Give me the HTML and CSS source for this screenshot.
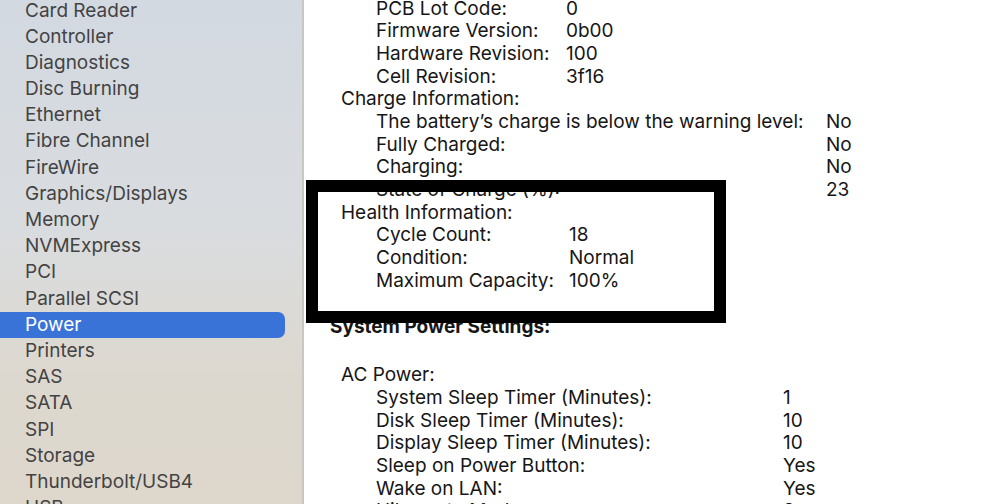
FILE: index.html
```html
<!DOCTYPE html>
<html lang="en">
<head>
  <meta charset="UTF-8">
  <title>System Information - Power</title>
  <link rel="stylesheet" href="styles.css">
</head>
<body>
  <div class="window">
    <!-- Sidebar list -->
    <ul class="sidebar">
      <li>Card Reader</li>
      <li>Controller</li>
      <li>Diagnostics</li>
      <li>Disc Burning</li>
      <li>Ethernet</li>
      <li>Fibre Channel</li>
      <li>FireWire</li>
      <li>Graphics/Displays</li>
      <li>Memory</li>
      <li>NVMExpress</li>
      <li>PCI</li>
      <li>Parallel SCSI</li>
      <li class="selected">Power</li>
      <li>Printers</li>
      <li>SAS</li>
      <li>SATA</li>
      <li>SPI</li>
      <li>Storage</li>
      <li>Thunderbolt/USB4</li>
      <li>USB</li>
    </ul>

    <!-- Detail pane -->
    <div class="detail">
      <div class="group sub pcb">
        <div class="row"><span class="label">PCB Lot Code:</span><span>0</span></div>
        <div class="row"><span class="label">Firmware Version:</span><span>0b00</span></div>
        <div class="row"><span class="label">Hardware Revision:</span><span>100</span></div>
        <div class="row"><span class="label">Cell Revision:</span><span>3f16</span></div>
      </div>

      <div class="heading">Charge Information:</div>
      <div class="group sub charge">
        <div class="row"><span class="label">The battery’s charge is below the warning level:</span><span>No</span></div>
        <div class="row"><span class="label">Fully Charged:</span><span>No</span></div>
        <div class="row"><span class="label">Charging:</span><span>No</span></div>
        <div class="row"><span class="label">State of Charge (%):</span><span>23</span></div>
      </div>

      <div class="heading">Health Information:</div>
      <div class="group sub health">
        <div class="row"><span class="label">Cycle Count:</span><span>18</span></div>
        <div class="row"><span class="label">Condition:</span><span>Normal</span></div>
        <div class="row"><span class="label">Maximum Capacity:</span><span>100%</span></div>
      </div>

      <div class="section-title">System Power Settings:</div>

      <div class="heading ac">AC Power:</div>
      <div class="group sub power">
        <div class="row"><span class="label">System Sleep Timer (Minutes):</span><span>1</span></div>
        <div class="row"><span class="label">Disk Sleep Timer (Minutes):</span><span>10</span></div>
        <div class="row"><span class="label">Display Sleep Timer (Minutes):</span><span>10</span></div>
        <div class="row"><span class="label">Sleep on Power Button:</span><span>Yes</span></div>
        <div class="row"><span class="label">Wake on LAN:</span><span>Yes</span></div>
        <div class="row"><span class="label">Hibernate Mode:</span><span>3</span></div>
      </div>

      <!-- annotation box drawn over the health section -->
      <div class="highlight"></div>
    </div>
  </div>
</body>
</html>
```

FILE: styles.css
```css
html, body {
  margin: 0;
  padding: 0;
  height: 100%;
  overflow: hidden;
}

body {
  font-family: Inter, "Liberation Sans", Arial, sans-serif;
  font-size: 19px;
  color: #161616;
  background: #ffffff;
}

.window {
  display: flex;
  height: 504px;
}

/* Sidebar */
.sidebar {
  list-style: none;
  margin: 0;
  padding: 0;
  width: 302px;
  flex-shrink: 0;
  border-right: 2px solid #c9c7c2;
  background: linear-gradient(180deg, #d3d9e1 0%, #d9dcdf 45%, #ddd8cf 75%, #ddd7cc 100%);
  overflow: hidden;
}

.sidebar li {
  height: 26.2px;
  line-height: 26.2px;
  padding-left: 25px;
  color: #434343;
  white-space: nowrap;
}

.sidebar li:first-child {
  margin-top: -2.5px;
}

.sidebar li.selected {
  margin-right: 17px;
  border-radius: 0 7px 7px 0;
  background: #3a73d8;
  color: #ffffff;
}

/* Detail pane */
.detail {
  position: relative;
  flex: 1;
  padding-left: 26px;
  overflow: hidden;
}

.detail .pcb {
  margin-top: -2.5px;
}

.row,
.heading {
  height: 22.7px;
  line-height: 22.7px;
  white-space: nowrap;
}

.heading {
  padding-left: 11px;
}

.sub .row {
  display: flex;
  padding-left: 46px;
}

.sub .label {
  flex-shrink: 0;
}

.pcb .label { width: 190px; }
.charge .label { width: 450px; }
.health .label { width: 193px; }
.power .label { width: 407px; }

.section-title {
  font-weight: 700;
  height: 22.7px;
  line-height: 22.7px;
  margin-top: 24px;
}

.heading.ac {
  margin-top: 25px;
}

.highlight {
  position: absolute;
  left: 2px;
  top: 180px;
  width: 420px;
  height: 143px;
  box-sizing: border-box;
  border: 12px solid #000000;
}
```
